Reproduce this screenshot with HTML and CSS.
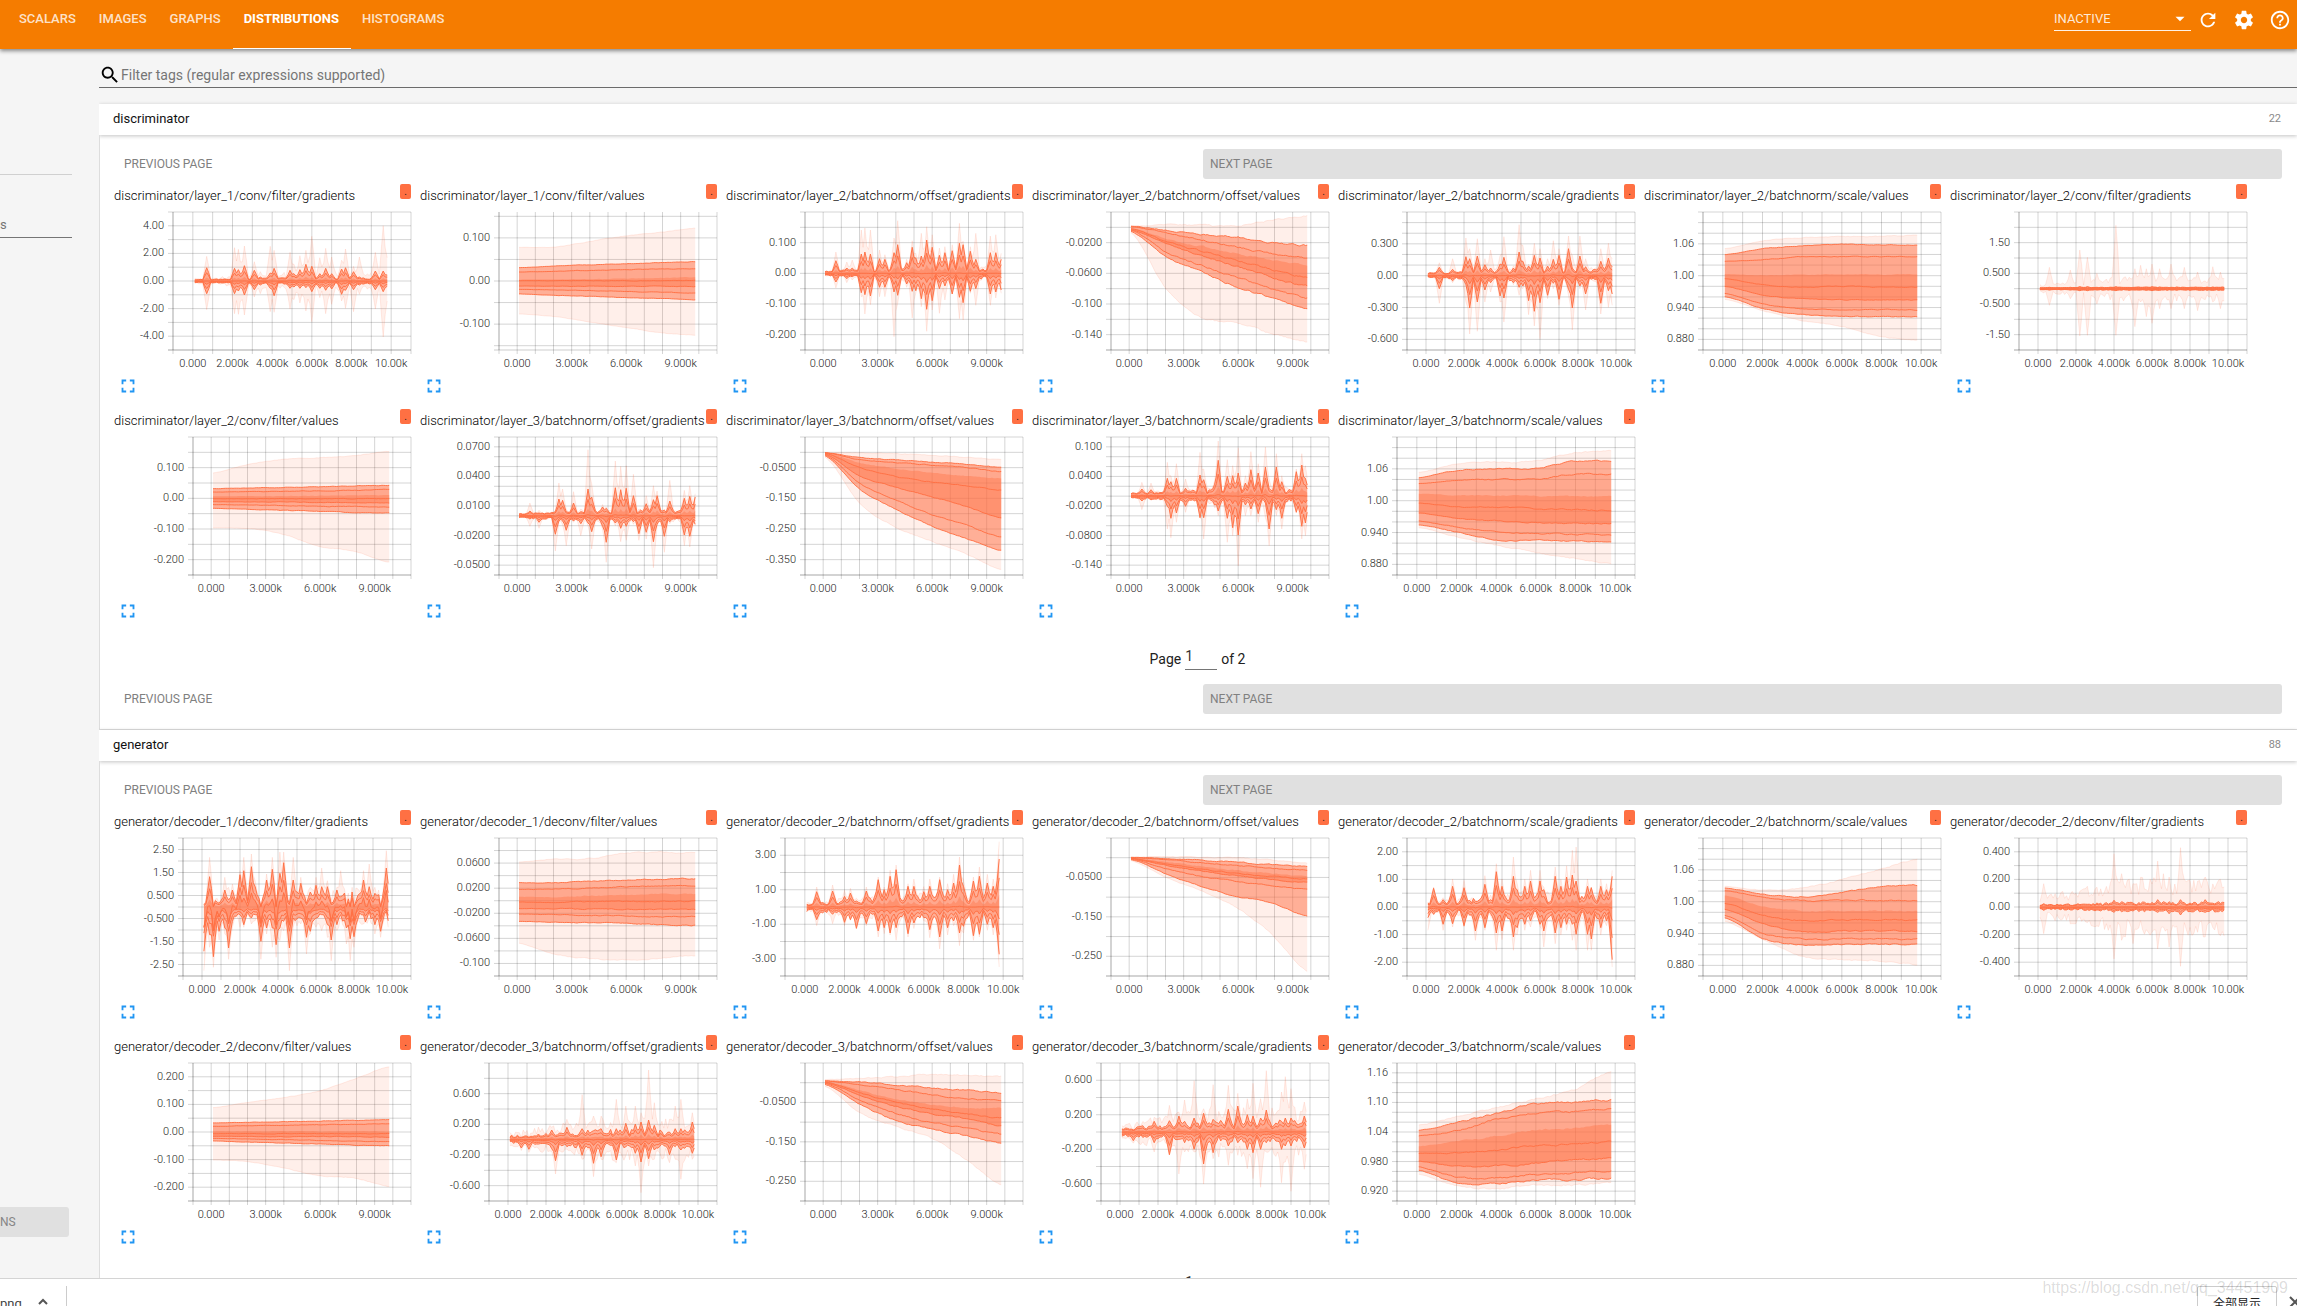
FILE: index.html
```html
<!DOCTYPE html>
<html lang="en">
<head>
<meta charset="utf-8">
<title>TensorBoard</title>
<link rel="stylesheet" href="styles.css">
</head>
<body>
<header class="toolbar">
  <nav class="tabs">
    <a class="tab" href="#scalars">SCALARS</a>
    <a class="tab" href="#images">IMAGES</a>
    <a class="tab" href="#graphs">GRAPHS</a>
    <a class="tab tab-active" href="#distributions">DISTRIBUTIONS</a>
    <a class="tab" href="#histograms">HISTOGRAMS</a>
  </nav>
  <div class="plugin-picker">
    <select class="plugin-select" aria-label="Inactive plugins"><option>INACTIVE</option></select>
    <svg class="picker-arrow" viewBox="0 0 24 24"><path d="M6 9l6 6 6-6z"/></svg>
  </div>
  <div class="actions">
    <button class="icon-button" aria-label="Reload"><svg viewBox="0 0 24 24"><path d="M17.65 6.35C16.2 4.9 14.21 4 12 4c-4.42 0-7.99 3.58-7.99 8s3.57 8 7.99 8c3.73 0 6.84-2.55 7.73-6h-2.08c-.82 2.33-3.04 4-5.65 4-3.31 0-6-2.69-6-6s2.69-6 6-6c1.66 0 3.14.69 4.22 1.78L13 11h7V4l-2.35 2.35z"/></svg></button>
    <button class="icon-button" aria-label="Settings"><svg viewBox="0 0 24 24"><path d="M19.43 12.98c.04-.32.07-.64.07-.98s-.03-.66-.07-.98l2.11-1.65c.19-.15.24-.42.12-.64l-2-3.46c-.12-.22-.39-.3-.61-.22l-2.49 1c-.52-.4-1.08-.73-1.69-.98l-.38-2.65C14.46 2.18 14.25 2 14 2h-4c-.25 0-.46.18-.49.42l-.38 2.65c-.61.25-1.17.59-1.69.98l-2.49-1c-.23-.09-.49 0-.61.22l-2 3.46c-.13.22-.07.49.12.64l2.11 1.65c-.04.32-.07.65-.07.98s.03.66.07.98l-2.11 1.65c-.19.15-.24.42-.12.64l2 3.46c.12.22.39.3.61.22l2.49-1c.52.4 1.08.73 1.69.98l.38 2.65c.03.24.24.42.49.42h4c.25 0 .46-.18.49-.42l.38-2.65c.61-.25 1.17-.59 1.69-.98l2.49 1c.23.09.49 0 .61-.22l2-3.46c.12-.22.07-.49-.12-.64l-2.11-1.65zM12 15.5c-1.93 0-3.5-1.57-3.5-3.5s1.57-3.5 3.5-3.5 3.5 1.57 3.5 3.5-1.57 3.5-3.5 3.5z"/></svg></button>
    <button class="icon-button" aria-label="Help"><svg viewBox="0 0 24 24"><path d="M11 18h2v-2h-2v2zm1-16C6.48 2 2 6.48 2 12s4.480 10 10 10 10-4.480 10-10S17.520 2 12 2zm0 18c-4.410 0-8-3.590-8-8s3.590-8 8-8 8 3.590 8 8-3.590 8-8 8zm0-14c-2.210 0-4 1.790-4 4h2c0-1.100.900-2 2-2s2 .900 2 2c0 2-3 1.750-3 5h2c0-2.250 3-2.500 3-5 0-2.210-1.790-4-4-4z"/></svg></button>
  </div>
</header>

<div class="workspace">
  <aside class="sidebar">
    <hr class="sidebar-rule">
    <input class="sidebar-input" type="text" aria-label="Runs filter" placeholder="s">
    <button class="sidebar-button">NS</button>
  </aside>
  <main class="center">
    <label class="filter">
      <svg class="filter-icon" viewBox="0 0 24 24"><path d="M15.500 14h-.790l-.280-.270C15.410 12.590 16 11.110 16 9.500 16 5.910 13.090 3 9.500 3S3 5.910 3 9.500 5.910 16 9.500 16c1.610 0 3.090-.590 4.230-1.570l.270.280v.790l5 4.990L20.490 19l-4.990-5zm-6 0C7.010 14 5 11.990 5 9.500S7.010 5 9.500 5 14 7.010 14 9.500 11.990 14 9.500 14z"/></svg>
      <input class="filter-input" type="text" aria-label="Filter tags" placeholder="Filter tags (regular expressions supported)">
    </label>
    <div class="groups">
      <section class="group">
        <h2 class="group-header"><span>discriminator</span><span class="group-count">22</span></h2>
        <div class="group-body">
          <div class="pager"><button class="page-button page-prev">PREVIOUS PAGE</button><button class="page-button page-next">NEXT PAGE</button></div>
          <div class="cards" data-group="discriminator"></div>
          <label class="page-number">Page <input class="page-input" type="text" value="1"> of 2</label>
          <div class="pager"><button class="page-button page-prev">PREVIOUS PAGE</button><button class="page-button page-next">NEXT PAGE</button></div>
        </div>
      </section>
      <section class="group">
        <h2 class="group-header"><span>generator</span><span class="group-count">88</span></h2>
        <div class="group-body">
          <div class="pager"><button class="page-button page-prev">PREVIOUS PAGE</button><button class="page-button page-next">NEXT PAGE</button></div>
          <div class="cards" data-group="generator"></div>
          <label class="page-number">Page <input class="page-input" type="text" value="1"> of 8</label>
          <div class="pager"><button class="page-button page-prev">PREVIOUS PAGE</button><button class="page-button page-next">NEXT PAGE</button></div>
        </div>
      </section>
    </div>
  </main>
</div>

<footer class="downloads">
  <div class="download-item"><span>png</span><svg class="chevron" viewBox="0 0 12 12"><path d="M2 8l4-4 4 4"/></svg></div>
  <button class="show-all">全部显示</button>
  <button class="close-bar" aria-label="Close"><svg viewBox="0 0 12 12"><path d="M1 1l10 10M11 1L1 11"/></svg></button>
  <span class="watermark">https://blog.csdn.net/qq_34451909</span>
</footer>
<script src="charts.js"></script>
</body>
</html>
```
FILE: styles.css
```css
* { box-sizing: border-box; }

body {
  margin: 0;
  height: 100vh;
  display: flex;
  flex-direction: column;
  overflow: hidden;
  background: #f5f5f5;
  color: #212121;
  font-family: Roboto, "Noto Sans CJK SC", sans-serif;
  font-size: 13px;
}

button, input, select { font-family: inherit; border: 0; padding: 0; background: none; }
input { outline: 0; }

.toolbar {
  position: relative;
  z-index: 2;
  flex: none;
  display: flex;
  height: 49px;
  padding: 0 6px 0 8px;
  background: #f57c00;
  color: #fff;
  box-shadow: 0 2px 4px rgba(0, 0, 0, .45);
}
.tabs { display: flex; margin-right: auto; }
.tab {
  padding: 11px 12px 0 11px;
  line-height: 16px;
  font-size: 13px;
  font-weight: 500;
  color: rgba(255, 255, 255, .8);
  text-decoration: none;
  border-bottom: 1px solid transparent;
}
.tab-active { color: #fff; font-weight: 700; border-bottom-color: #fff; }

.plugin-picker { position: relative; width: 137px; height: 31px; margin-right: 6px; border-bottom: 1px solid rgba(255, 255, 255, .9); }
.plugin-select {
  appearance: none;
  width: 100%;
  height: 36px;
  color: rgba(255, 255, 255, .85);
  font-size: 13px;
}
.picker-arrow { position: absolute; right: 2px; top: 10px; width: 18px; height: 18px; fill: #fff; pointer-events: none; }
.actions { display: flex; gap: 14px; height: 40px; align-items: center; }
.icon-button { width: 22px; height: 22px; }
.icon-button svg { display: block; width: 22px; height: 22px; fill: #fff; }

.workspace { flex: 1; min-height: 0; display: flex; overflow: hidden; }

.sidebar { flex: none; width: 99px; display: flex; flex-direction: column; align-items: flex-start; padding: 125px 27px 41px 0; }
.sidebar-rule { width: 100%; margin: 0 0 37px; border: 0; border-top: 1px solid #d0d0d0; }
.sidebar-input { width: 100%; height: 26px; border-bottom: 1px solid #757575; font-size: 13px; }
.sidebar-input::placeholder, .filter-input::placeholder { color: #757575; opacity: 1; }
.sidebar-button { width: 69px; height: 30px; margin-top: auto; border-radius: 0 3px 3px 0; background: #e0e0e0; color: #858585; font-size: 12px; text-align: left; }

.center { flex: 1; min-width: 0; overflow: hidden; }
.filter { display: flex; align-items: center; height: 39px; padding-top: 14px; border-bottom: 1px solid #6b6b6b; }
.filter-icon { width: 22px; height: 22px; flex: none; }
.filter-input { flex: 1; font-size: 14px; }

.groups { margin-top: 16px; background: #fff; }
.group-header {
  display: flex;
  align-items: center;
  justify-content: space-between;
  height: 31px;
  margin: 0;
  padding: 0 16px 2px 14px;
  background: #fff;
  color: #111;
  font-size: 13px;
  font-weight: 400;
  box-shadow: 0 1px 4px rgba(0, 0, 0, .24);
}
.group-count { color: #8a8a8a; font-size: 11px; }
.group-body { padding: 14px 15px 15px 13px; border-left: 1px solid #ddd; border-bottom: 1px solid #ddd; }

.pager { display: flex; gap: 7px; padding-left: 4px; }
.page-button { flex: 1; height: 30px; padding-left: 7px; border-radius: 3px; color: #808080; font-size: 12px; text-align: left; }
.page-next { background: #e0e0e0; }
.page-number { display: flex; align-items: center; justify-content: center; height: 50px; gap: 4px; padding-bottom: 1px; font-size: 14px; }
.page-input { width: 32px; height: 22px; padding-bottom: 4px; border-bottom: 1px solid #757575; color: #333; font-size: 14px; }

.cards { display: flex; flex-wrap: wrap; gap: 0 8px; margin-top: 5px; }
.card { width: 298px; padding-bottom: 12px; }
.card-head { display: flex; align-items: flex-start; justify-content: space-between; height: 26px; }
.card-title { margin: 0; padding-left: 1px; color: #000; font-size: 13px; font-weight: 300; line-height: 24px; white-space: nowrap; }
.run-chip { width: 11px; height: 15px; flex: none; border-radius: 2px; background: #ff7043; color: #222; font-size: 10px; line-height: 15px; text-align: center; }
.chart { display: block; width: 298px; height: 160px; overflow: visible; }
.grid-line { stroke: #000; stroke-opacity: .17; }
.axis-line { stroke: #000; stroke-opacity: .2; }
.tick-label { font-size: 11px; font-weight: 300; fill: #222; }
.tick-x { text-anchor: middle; }
.tick-y { text-anchor: end; }
.band-outer { fill: #ff7043; fill-opacity: .11; }
.band-mid { fill: #ff7043; fill-opacity: .5; }
.band-inner { fill: #ff7043; fill-opacity: .1; }
.band-core { fill: #ff7043; fill-opacity: .4; }
.quantile { fill: none; stroke: #ff7043; stroke-opacity: .95; }
.quantile-edge { fill: none; stroke: #ff7043; stroke-opacity: .13; }
.expand { display: block; width: 22px; height: 22px; margin: 5px 0 0 4px; }
.expand svg { display: block; width: 22px; height: 22px; fill: #2196f3; }

.downloads {
  position: relative;
  flex: none;
  display: flex;
  height: 28px;
  padding-top: 7px;
  overflow: hidden;
  background: #fff;
  border-top: 1px solid #d4d4d4;
  color: #444;
}
.download-item { display: flex; gap: 15px; width: 67px; height: 32px; padding-top: 10px; margin-right: auto; border-right: 1px solid #ccc; line-height: 16px; font-size: 13px; }
.chevron { width: 12px; height: 12px; fill: none; stroke: #555; stroke-width: 2; }
.show-all { width: 80px; height: 32px; border: 1px solid #ccc; border-radius: 2px; color: #222; font-size: 12px; }
.close-bar { width: 8px; height: 32px; margin-left: 12px; overflow: hidden; }
.close-bar svg { display: block; width: 12px; height: 12px; fill: none; stroke: #555; stroke-width: 2; }
.watermark { position: absolute; right: 9px; top: 0; color: rgba(0, 0, 0, .15); font-family: "Liberation Sans", Arial, sans-serif; font-size: 16px; line-height: 18px; }
```
FILE: charts.js
```js
// Plot box inside every card; the x domain is always -1000..11000 steps.
const RIGHT = 298, TOP = 2, HEIGHT = 138, SAMPLES = 98;

// left: plot edge, y: [max, min, grid step, first label, label step]
// rows: nine quantiles (max..min), each sampled at six even steps, in thirds of a pixel below the plot top
// spikes: [sample, up, down, outer up, outer down] around the centre line
const CHARTS = {
  discriminator: [
    { tag: 'layer_1/conv/filter/gradients', left: 60, y: [5, -5, 1, 4, 2], center: 207, base: 8, outer: 26,
      spikes: [[6,38,36,74,86],[20,36,36,100,98],[22,32,28,95,100],[25,44,40,105,102],[30,30,24,58,48],[33,10,10,28,38],[38,22,20,104,92],[40,36,42,92,94],[48,30,20,86,84],[50,20,16,50,56],[53,32,20,76,66],[56,48,18,92,90],[59,42,30,134,122],[63,20,20,70,50],[66,36,26,98,98],[69,20,22,72,70],[74,34,38,62,60],[76,38,26,96,82],[80,26,24,44,92],[83,10,10,72,40],[91,28,24,86,84],[95,28,30,166,168],[97,16,14,70,60]] },
    { tag: 'layer_1/conv/filter/values', left: 80, y: [.16, -.16, .05, .1, .1], rows: [[106,105,88,72,61,48],[167,162,158,155,152,149],[180,178,175,173,171,170],[203,202,201,200,198,196],[206,206,206,206,206,205],[222,223,223,223,223,224],[232,234,236,238,241,243],[246,250,253,257,260,263],[306,314,330,346,362,370]] },
    { tag: 'layer_2/batchnorm/offset/gradients', left: 80, y: [.2, -.25, .05, .1, .1], center: 184, base: 16, outer: 24,
      spikes: [[6,36,24,64,44],[12,14,14,34,28],[15,14,8,40,20],[20,56,56,130,70],[22,62,62,136,122],[25,56,66,130,94],[30,42,40,70,70],[33,40,40,56,70],[38,60,54,106,190],[40,84,64,158,90],[45,30,30],[48,76,52,98,134],[50,44,50,60,60],[53,50,74,120,100],[56,98,106,140,174],[59,76,80,116,110],[63,52,44,76,120],[66,60,36,80,80],[70,66,60,86,60],[74,88,70,150,136],[76,84,86,96,140],[80,64,52,80,60],[83,40,44,120,96],[91,60,60,112,96],[94,60,54,116,74],[97,40,48,60,60]] },
    { tag: 'layer_2/batchnorm/offset/values', left: 80, y: [.02, -.16, .02, -.02, .04], noise: 2, rows: [[42,38,40,42,24,12],[43,55,68,75,92,100],[44,63,85,105,125,138],[48,80,103,125,142,158],[50,88,118,145,172,196],[53,95,132,162,196,222],[55,120,160,195,230,258],[58,135,180,225,258,294],[62,230,316,332,365,392]] },
    { tag: 'layer_2/batchnorm/scale/gradients', left: 70, y: [.6, -.7, .1, .3, .3], center: 190, base: 16, outer: 24,
      spikes: [[6,22,38,38,84],[13,16,14,50,22],[20,54,26,112,80],[22,48,96,80,176],[26,56,78,110,168],[30,30,42,50,80],[33,20,20,76,50],[38,32,60,60,80],[40,52,66,116,140],[45,20,20],[48,68,34,152,60],[50,40,30,90,40],[53,26,74,34,118],[56,58,106,96,152],[59,50,80,80,190],[63,26,58,50,70],[66,46,22,104,40],[69,58,70,80,90],[74,78,40,118,60],[76,20,96,60,164],[80,56,30,118,40],[83,24,54,50,104],[91,40,82,80,116],[95,50,44,96,96],[97,24,54,50,90]] },
    { tag: 'layer_2/batchnorm/scale/values', left: 60, y: [1.12, .86, .02, 1.06, .06], noise: 1, rows: [[110,86,77,74,73,70],[128,110,102,97,99,98],[148,143,135,133,134,134],[186,190,188,187,187,187],[200,218,225,223,225,226],[223,250,260,263,263,264],[244,276,290,293,293,294],[254,290,308,313,314,314],[262,296,325,343,372,385]] },
    { tag: 'layer_2/conv/filter/gradients', left: 70, y: [2.5, -2, .5, 1.5, 1], center: 230, base: 3, outer: 38,
      spikes: [[5,2,2,64,50],[16,2,2,56,30],[21,4,4,116,142],[25,4,4,94,140],[30,2,2,46,46],[40,4,4,190,140],[50,2,2,60,114],[53,2,2,70,40],[56,3,3,60,84],[59,4,4,74,104],[63,3,3,60,60],[69,2,2,74,60],[76,2,2,64,60],[83,2,2,50,66],[91,3,3,66,40],[95,2,2,50,60]] },
    { tag: 'layer_2/conv/filter/values', left: 80, y: [.2, -.25, .05, .1, .1], noise: .7, rows: [[108,82,67,62,56,43],[155,153,151,149,147,145],[165,164,163,161,160,158],[178,177,177,176,175,174],[185,185,185,185,185,185],[194,195,195,196,197,198],[203,204,206,208,209,211],[214,217,220,223,226,228],[273,275,292,328,343,375]] },
    { tag: 'layer_3/batchnorm/offset/gradients', left: 80, y: [.08, -.06, .01, .07, .03], center: 236, base: 15, outer: 20,
      spikes: [[6,12,8,38,32],[11,6,18,16,38],[20,10,54,16,106],[22,48,14,98,20],[24,44,14,80,28],[26,10,42,20,90],[30,36,14,72,20],[34,10,22,20,60],[38,78,20,198,30],[40,54,46,96,100],[46,24,30],[48,20,78,26,140],[53,82,20,164,30],[56,76,36,148,78],[59,80,30,150,74],[63,58,16,124,26],[66,10,52,20,74],[70,34,48,60,70],[74,46,76,90,156],[76,58,24,74,30],[80,14,60,20,110],[83,42,16,106,24],[91,50,56,76,90],[94,56,60,90,94],[97,54,24,66,30]] },
    { tag: 'layer_3/batchnorm/offset/values', left: 80, y: [.05, -.4, .05, -.05, .1], noise: 1, rows: [[47,48,50,54,60,68],[47,62,69,75,82,91],[47,68,76,84,92,104],[47,78,94,107,117,124],[49,92,118,134,146,160],[51,118,150,178,208,242],[53,140,188,232,264,300],[56,158,216,266,304,340],[60,200,270,312,350,398]] },
    { tag: 'layer_3/batchnorm/scale/gradients', left: 80, y: [.12, -.16, .02, .1, .06], center: 176, base: 18, outer: 26,
      spikes: [[6,18,14,40,42],[11,16,10,38,14],[20,50,30,100,100],[22,40,66,60,126],[25,50,50,96,80],[30,20,30,50,50],[38,60,64,130,50],[40,46,64,80,130],[46,32,26],[48,104,44,164,60],[53,56,66,108,140],[56,58,94,90,120],[59,66,116,144,210],[63,36,26,60,60],[66,76,38,132,60],[70,66,52,96,80],[74,84,20,146,66],[76,20,98,50,150],[80,84,40,126,60],[83,40,66,60,100],[91,70,48,80,50],[94,90,90,126,130],[96,50,80,90,120]] },
    { tag: 'layer_3/batchnorm/scale/values', left: 60, y: [1.12, .86, .02, 1.06, .06], noise: 1.5, rows: [[106,80,75,72,48,42],[122,100,96,95,74,72],[140,130,127,127,112,112],[170,175,176,177,178,178],[198,210,211,215,218,220],[228,244,252,256,259,260],[252,270,285,289,292,294],[264,285,308,310,312,314],[272,300,325,345,364,380]] }
  ],
  generator: [
    { tag: 'decoder_1/deconv/filter/gradients', left: 70, y: [3, -3, .5, 2.5, 1], center: 208, base: 44, outer: 60, dip: .8,
      spikes: [[0,6,130,10,190],[3,90,80,150,120],[5,0,146,0,180],[8,10,70],[11,50,60,90,80],[13,20,120,60,156],[15,50,40,70,60],[19,96,20,110,60],[21,108,50,150,60],[25,120,30,160,50],[27,60,20,80,40],[30,0,100,10,156],[33,80,60,100,80],[36,112,60,150,120],[38,0,110,0,150],[40,100,60,166,100],[42,132,40,166,70],[45,10,120,20,190],[47,80,30,150,60],[51,70,30,90,50],[54,10,88,30,140],[56,44,70,60,80],[59,64,30,90,60],[62,60,20,118,70],[65,60,50,80,90],[67,10,96,20,160],[70,50,50,60,70],[72,30,20,110,30],[75,0,60,20,110],[77,0,92,10,160],[79,0,86,10,120],[84,80,20,110,50],[87,60,10,130,30],[90,40,50,60,80],[93,0,70,10,90],[96,116,10,170,20]] },
    { tag: 'decoder_1/deconv/filter/values', left: 80, y: [.1, -.12, .02, .06, .04], noise: 1.2, rows: [[72,64,62,46,43,44],[134,134,130,126,124,122],[154,153,150,146,144,143],[176,178,174,172,168,168],[192,193,191,190,190,190],[212,212,213,214,214,214],[228,230,232,234,236,236],[250,252,254,257,260,262],[316,348,362,366,362,353]] },
    { tag: 'decoder_2/batchnorm/offset/gradients', left: 60, y: [4, -4, 1, 3, 2], center: 207, base: 34, outer: 44,
      spikes: [[5,44,36,60,56],[13,46,20,66,50],[19,30,44,50,56],[22,40,36,56,40],[25,16,62,26,66],[30,46,48,60,56],[36,80,70,90,90],[39,50,60,60,80],[42,90,76,110,84],[45,110,60,126,100],[51,60,78,70,90],[54,60,46],[59,44,30],[62,60,66],[67,80,88,90,126],[71,50,60],[74,70,40],[77,124,76,150,116],[79,60,56],[84,76,84,90,100],[87,90,80,120,90],[91,70,50],[94,60,60],[97,142,140,196,180]] },
    { tag: 'decoder_2/batchnorm/offset/values', left: 80, y: [.05, -.3, .05, -.05, .1], noise: 1.2, rows: [[57,56,57,60,66,76],[58,62,67,72,80,86],[59,65,74,82,91,97],[60,72,85,97,107,115],[61,78,94,106,115,122],[62,82,99,113,125,133],[63,92,115,130,143,154],[65,108,145,175,195,234],[68,118,160,210,290,400]] },
    { tag: 'decoder_2/batchnorm/scale/gradients', left: 70, y: [2.5, -2.5, .5, 2, 1], center: 207, base: 34, outer: 46,
      spikes: [[0,10,30,10,70],[3,54,20,60,24],[8,20,50],[13,60,48,84,60],[19,56,54,80,60],[25,14,70,20,100],[30,66,60,94,70],[36,104,76,130,130],[39,60,70],[45,90,88,150,130],[47,50,60],[51,60,50],[54,76,40,110,60],[59,76,50,110,60],[61,50,70,60,120],[67,90,76,120,110],[70,60,60],[73,88,50],[76,94,50,170,100],[78,76,80,180,130],[84,60,80,84,130],[86,56,94,60,130],[91,60,60],[94,50,40],[97,90,156,110,180]] },
    { tag: 'decoder_2/batchnorm/scale/values', left: 60, y: [1.12, .86, .02, 1.06, .06], noise: 1.5, rows: [[145,156,150,126,95,64],[150,168,176,164,146,142],[158,178,189,187,188,189],[172,206,218,219,218,218],[196,232,247,246,245,247],[214,258,280,279,278,279],[232,286,303,303,303,304],[240,302,319,319,319,319],[250,305,355,366,368,380]] },
    { tag: 'decoder_2/deconv/filter/gradients', left: 70, y: [.5, -.5, .1, .4, .2], center: 207, base: 13, outer: 90,
      spikes: [[2,8,8,70,80],[39,18,14,160,156],[43,14,12,100,100],[49,10,10,70,110],[62,20,14,138,126],[65,14,10,100,60],[68,14,18,90,120],[74,20,22,178,178],[81,12,12,80,80],[87,20,14,90,90],[94,14,12,80,80]] },
    { tag: 'decoder_2/deconv/filter/values', left: 80, y: [.25, -.25, .05, .2, .1], noise: .7, rows: [[134,118,104,84,48,12],[180,178,176,174,172,170],[190,188,187,185,184,182],[205,205,205,205,205,205],[212,212,212,212,212,212],[220,220,221,221,221,222],[226,228,230,232,234,236],[234,237,240,243,246,248],[291,296,315,338,345,370]] },
    { tag: 'decoder_3/batchnorm/offset/gradients', left: 70, y: [1, -.8, .2, .6, .4], center: 229, base: 28, outer: 66,
      spikes: [[6,4,24],[10,4,28],[22,26,26],[24,10,62,20,104],[30,34,20,60,30],[38,30,46,134,60],[44,24,70,70,112],[48,30,50,70,60],[56,30,60,120,70],[61,46,20,100,50],[66,44,40,100,80],[69,50,66,80,160],[73,56,56,208,80],[76,40,30,110,60],[84,20,44,60,70],[87,30,20,100,60],[90,30,30,120,120],[96,50,40,80,60]] },
    { tag: 'decoder_3/batchnorm/offset/values', left: 80, y: [.05, -.3, .05, -.05, .1], noise: 1.5, rows: [[50,46,42,34,38,40],[53,58,65,75,82,90],[54,65,78,95,106,115],[56,82,108,125,135,135],[57,90,118,138,152,165],[59,97,130,152,167,190],[61,112,150,178,195,214],[64,125,172,198,218,240],[70,150,190,225,290,365]] },
    { tag: 'decoder_3/batchnorm/scale/gradients', left: 70, y: [.8, -.8, .2, .6, .4], center: 207, base: 34, outer: 78,
      spikes: [[6,4,24],[17,30,30,44,60],[25,32,66,80,60],[30,46,20,60,126],[33,30,30,96,60],[38,40,50,154,60],[43,54,94,70,156],[48,36,60,142,80],[56,66,40,140,100],[61,76,30,116,70],[66,50,50,100,110],[69,46,60,146,140],[73,40,50,100,166],[76,64,30,184,60],[84,30,50,120,152],[86,40,40,166,90],[89,40,40,130,178],[96,46,46,90,112]] },
    { tag: 'decoder_3/batchnorm/scale/values', left: 60, y: [1.18, .9, .02, 1.16, .06], noise: 2.2, rows: [[186,160,135,108,80,26],[202,178,152,122,118,111],[218,202,170,150,145,138],[250,235,220,203,193,184],[271,270,262,250,244,235],[295,310,310,300,292,285],[312,342,346,333,330,323],[322,360,362,352,350,345],[334,368,378,368,367,360]] }
  ]
};

function random(seed) {
  return () => {
    seed = (seed * 1664525 + 1013904223) % 4294967296;
    return seed / 4294967296;
  };
}

// Catmull-Rom through evenly spaced values.
function smooth(values, t) {
  const n = values.length - 1;
  const i = Math.min(n - 1, Math.floor(t * n));
  const f = t * n - i;
  const p0 = values[Math.max(0, i - 1)], p1 = values[i], p2 = values[i + 1], p3 = values[Math.min(n, i + 2)];
  return p1 + .5 * f * (p2 - p0 + f * (2 * p0 - 5 * p1 + 4 * p2 - p3 + f * (3 * (p1 - p2) + p3 - p0)));
}

function smoothQuantiles(chart, rand) {
  const amount = chart.noise || .6;
  return chart.rows.map(row => {
    let drift = 0;
    return Array.from({ length: SAMPLES }, (_, i) => {
      const t = i / (SAMPLES - 1);
      drift = drift * .7 + (rand() - .5) * amount * 2 * Math.min(1, .3 + t * 2);
      return smooth(row, t) + drift;
    });
  });
}

function spikyQuantiles(chart, rand) {
  const sides = [[], [], [], []];
  for (let i = 0; i < SAMPLES; i++) {
    const grow = .35 + .65 * Math.min(1, i / 45);
    const inner = chart.base * grow, outer = chart.outer * grow;
    sides[0].push(inner * (.3 + .7 * rand()));
    sides[1].push(inner * (.3 + .7 * rand()));
    sides[2].push(outer * (.4 + .6 * rand()));
    sides[3].push(outer * (.4 + .6 * rand()));
  }
  for (const [at, up, down, outerUp = up * 1.4, outerDown = down * 1.4] of chart.spikes) {
    [up, down, outerUp, outerDown].forEach((size, s) => {
      for (const [offset, share] of [[-1, .55], [0, 1], [1, .6]]) {
        const i = at + offset;
        if (sides[s][i] !== undefined) sides[s][i] = offset ? Math.max(sides[s][i], size * share) : size;
      }
    });
  }
  const [up, down, outerUp, outerDown] = sides;
  const c = chart.center;
  const sway = chart.dip || .08;
  const middle = up.map((v, i) => c - (v - down[i]) * sway * .6);
  return [
    outerUp.map((v, i) => c - Math.max(v, up[i] + 2)),
    up.map(v => c - v - 2),
    up.map((v, i) => Math.min(middle[i], c - v * .6) - 2),
    up.map((v, i) => Math.min(middle[i], c - v * .25) - 1),
    middle,
    down.map((v, i) => Math.max(middle[i], c + v * .25) + 1),
    down.map((v, i) => Math.max(middle[i], c + v * .58) + 2),
    down.map(v => c + v + 2),
    outerDown.map((v, i) => c + Math.max(v, down[i] + 2))
  ];
}

function drawChart(chart, seed) {
  const rand = random(seed);
  const { left } = chart;
  const cell = (RIGHT - left) / 12;
  const bottom = TOP + HEIGHT;
  const [max, min, step, firstLabel, labelStep] = chart.y;
  const yOf = v => TOP + (max - v) / (max - min) * HEIGHT;
  let out = '';

  for (let i = 0; i <= 12; i++) {
    const x = left + i * cell;
    out += `<line class="grid-line" x1="${x}" x2="${x}" y1="${TOP}" y2="${bottom + 4}"/>`;
  }
  const start = Math.floor(max / step + 1e-6) * step;
  for (let v = start; v >= min - 1e-6; v -= step) {
    out += `<line class="grid-line" x1="${left - 5}" x2="${RIGHT}" y1="${yOf(v)}" y2="${yOf(v)}"/>`;
  }
  out += `<line class="axis-line" x1="${left - 5}" x2="${RIGHT}" y1="${bottom}" y2="${bottom}"/>`;
  out += `<line class="axis-line" x1="${left}" x2="${left}" y1="${TOP}" y2="${bottom}"/>`;

  const quantiles = chart.rows ? smoothQuantiles(chart, rand) : spikyQuantiles(chart, rand);
  const lines = quantiles.map(q => q.map((v, i) =>
    `${(left + cell * (1.1 + i / (SAMPLES - 1) * 9.7)).toFixed(1)},${(TOP + v / 3).toFixed(1)}`));
  const area = (a, b, name) => {
    out += `<polygon class="${name}" points="${lines[a].join(' ')} ${[...lines[b]].reverse().join(' ')}"/>`;
  };
  area(0, 8, 'band-outer');
  area(1, 7, 'band-mid');
  area(2, 6, 'band-inner');
  area(3, 5, 'band-core');
  [0, 8].forEach(i => { out += `<polyline class="quantile-edge" points="${lines[i].join(' ')}"/>`; });
  [1, 2, 4, 5, 6, 7].forEach(i => { out += `<polyline class="quantile" points="${lines[i].join(' ')}"/>`; });

  const every = left > 70 ? 3 : 2;
  for (let k = 0; k <= 10; k += every) {
    const text = k === 0 ? '0.000' : `${k.toPrecision(4)}k`;
    out += `<text class="tick-label tick-x" x="${left + cell * (k + 1)}" y="157">${text}</text>`;
  }
  for (let v = firstLabel; v > min + 1e-6; v -= labelStep) {
    const text = Math.abs(v) < 1e-9 ? '0.00' : v.toPrecision(3);
    out += `<text class="tick-label tick-y" x="${left - 9}" y="${Math.round(yOf(v)) + 3}">${text}</text>`;
  }
  return `<svg class="chart" viewBox="0 0 298 160">${out}</svg>`;
}

const EXPAND = '<svg viewBox="0 0 24 24"><path d="M7 14H5v5h5v-2H7v-3zm-2-4h2V7h3V5H5v5zm12 7h-3v2h5v-5h-2v3zM14 5v2h3v3h2V5h-5z"/></svg>';

document.querySelectorAll('.cards').forEach(box => {
  const group = box.dataset.group;
  box.innerHTML = CHARTS[group].map((chart, i) => `
    <article class="card">
      <div class="card-head"><h3 class="card-title">${group}/${chart.tag}</h3><span class="run-chip">.</span></div>
      ${drawChart(chart, 101 + i * 37 + group.length)}
      <button class="expand" aria-label="Expand chart">${EXPAND}</button>
    </article>`).join('');
});
```
